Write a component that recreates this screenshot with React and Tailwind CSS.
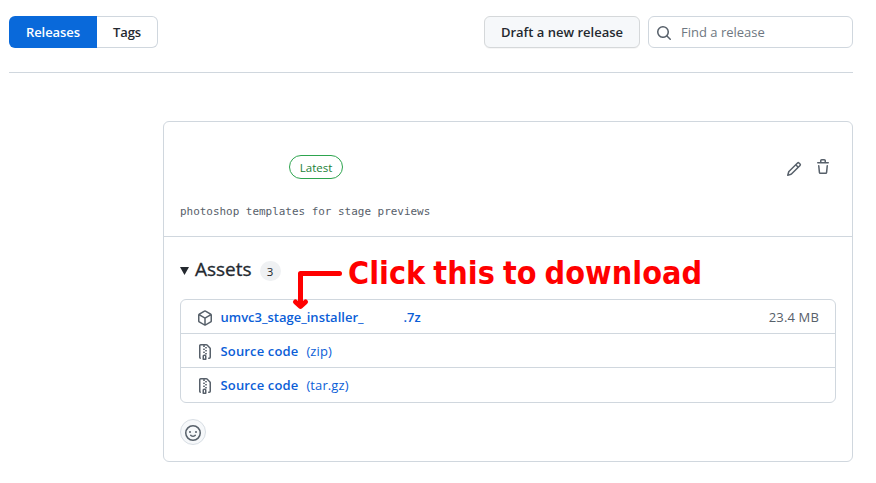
const icons = {
  search: "M10.68 11.74a6 6 0 0 1-7.922-8.982 6 6 0 0 1 8.982 7.922l3.04 3.04a.749.749 0 0 1-.326 1.275.749.749 0 0 1-.734-.215ZM11.5 7a4.499 4.499 0 1 0-8.997 0A4.499 4.499 0 0 0 11.5 7Z",
  pencil: "M11.013 1.427a1.75 1.75 0 0 1 2.474 0l1.086 1.086a1.75 1.75 0 0 1 0 2.474l-8.61 8.61c-.21.21-.47.364-.756.445l-3.251.93a.75.75 0 0 1-.927-.928l.929-3.25c.081-.286.235-.547.445-.758l8.61-8.61Zm.176 4.823L9.75 4.81l-6.286 6.287a.253.253 0 0 0-.064.108l-.558 1.953 1.953-.558a.253.253 0 0 0 .108-.064Zm1.238-3.763a.25.25 0 0 0-.354 0L10.811 3.75l1.439 1.44 1.263-1.263a.25.25 0 0 0 0-.354Z",
  trash: "M11 1.75V3h2.25a.75.75 0 0 1 0 1.5H2.75a.75.75 0 0 1 0-1.5H5V1.75C5 .784 5.784 0 6.75 0h2.5C10.216 0 11 .784 11 1.75ZM4.496 6.675l.66 6.6a.25.25 0 0 0 .249.225h5.19a.25.25 0 0 0 .249-.225l.66-6.6a.75.75 0 0 1 1.492.149l-.66 6.6A1.748 1.748 0 0 1 10.595 15h-5.19a1.75 1.75 0 0 1-1.741-1.575l-.66-6.6a.75.75 0 1 1 1.492-.15ZM6.5 1.75V3h3V1.75a.25.25 0 0 0-.25-.25h-2.5a.25.25 0 0 0-.25.25Z",
  package: "m8.878.392 5.25 3.045c.54.314.872.89.872 1.514v6.098a1.75 1.75 0 0 1-.872 1.514l-5.25 3.045a1.75 1.75 0 0 1-1.756 0l-5.25-3.045A1.75 1.75 0 0 1 1 11.049V4.951c0-.624.332-1.201.872-1.514L7.122.392a1.75 1.75 0 0 1 1.756 0ZM7.875 1.69l-4.63 2.685L8 7.133l4.755-2.758-4.63-2.685a.248.248 0 0 0-.25 0ZM2.5 5.677v5.372c0 .09.047.171.125.216l4.625 2.683V8.432Zm6.25 8.271 4.625-2.683a.25.25 0 0 0 .125-.216V5.677L8.75 8.432Z",
  zip: "M3.5 1.75v11.5c0 .09.048.173.126.217a.75.75 0 0 1-.752 1.298A1.748 1.748 0 0 1 2 13.25V1.75C2 .784 2.784 0 3.75 0h5.586c.464 0 .909.185 1.237.513l2.914 2.914c.329.328.513.773.513 1.237v8.586A1.75 1.75 0 0 1 12.25 15h-.5a.75.75 0 0 1 0-1.5h.5a.25.25 0 0 0 .25-.25V4.664a.25.25 0 0 0-.073-.177L9.513 1.573a.25.25 0 0 0-.177-.073H7.25a.75.75 0 0 1 0 1.5h-.5a.75.75 0 0 1 0-1.5h-3a.25.25 0 0 0-.25.25Zm3.75 8.75h.5c.966 0 1.75.784 1.75 1.75v3a.75.75 0 0 1-.75.75h-2.5a.75.75 0 0 1-.75-.75v-3c0-.966.784-1.75 1.75-1.75ZM6 5.250a.75.75 0 0 1 .75-.75h.5a.75.75 0 0 1 0 1.5h-.5A.75.75 0 0 1 6 5.250Zm.75 2.250h.5a.75.75 0 0 1 0 1.5h-.5a.75.75 0 0 1 0-1.5ZM8 6.750A.75.75 0 0 1 8.750 6h.5a.75.75 0 0 1 0 1.5h-.5A.75.75 0 0 1 8 6.750ZM8.750 3h.5a.75.75 0 0 1 0 1.5h-.5a.75.75 0 0 1 0-1.5ZM8 9.750A.75.75 0 0 1 8.750 9h.5a.75.75 0 0 1 0 1.5h-.5A.75.75 0 0 1 8 9.750Zm-1 2.500v2.250h1v-2.250a.25.25 0 0 0-.25-.25h-.5a.25.25 0 0 0-.25.25Z",
  smiley: "M8 0a8 8 0 1 1 0 16A8 8 0 0 1 8 0ZM1.5 8a6.5 6.5 0 1 0 13 0 6.5 6.5 0 0 0-13 0Zm3.82 1.636a.75.75 0 0 1 1.038.175l.007.009c.103.118.22.222.35.31.264.178.683.37 1.285.37.602 0 1.02-.192 1.285-.371.13-.088.247-.192.35-.31l.007-.008a.75.75 0 0 1 1.222.87c-.22.27-.46.49-.73.672-.63.418-1.37.638-2.127.629-.946 0-1.652-.308-2.126-.63a3.331 3.331 0 0 1-.73-.683.75.75 0 0 1 .174-1.042ZM12 7a1 1 0 1 1-2 0 1 1 0 0 1 2 0ZM5 8a1 1 0 1 1 0-2 1 1 0 0 1 0 2Z",
};

function Icon({ name, className = "" }) {
  return (
    <svg viewBox="0 0 16 16" fill="currentColor" className={`size-4 shrink-0 text-[#57606a] ${className}`}>
      <path d={icons[name]} />
    </svg>
  );
}

function AssetRow({ icon, children }) {
  return (
    <li className="flex h-[34px] items-center border-t border-[#d0d7de] px-4 pt-px first:h-[33px] first:border-t-0 first:pt-0.5 last:h-[35px] last:pt-0">
      <Icon name={icon} className="mt-px mr-[7.500px]" />
      {children}
    </li>
  );
}

function SourceRow({ format }) {
  return (
    <AssetRow icon="zip">
      <span className="mr-2 pt-0.5 font-semibold tracking-[0.150px]">Source code</span>
      <span className="pt-0.5 tracking-[0.100px]">({format})</span>
    </AssetRow>
  );
}

export default function App() {
  return (
    <div className="relative h-[483px] w-[876px] overflow-hidden bg-white pt-4 pr-[23px] pl-[9px] font-['Open_Sans','Noto_Sans',sans-serif] text-[13px] text-[#24292f]">
      <header className="flex h-[57px] items-start justify-between border-b border-[#d0d7de]">
        <nav className="flex h-8 font-semibold">
          <a className="flex w-[88px] items-center justify-center rounded-l-md bg-[#0969da] pt-0.5 tracking-[-0.05px] text-white">Releases</a>
          <a className="flex w-[61px] items-center justify-center rounded-r-md border border-l-0 border-[#d0d7de] pt-0.5 tracking-[-0.05px]">Tags</a>
        </nav>
        <div className="flex h-8 gap-2">
          <button className="w-[156px] rounded-md border border-[#d5d8da] bg-[#f6f8fa] pt-0.5 font-semibold shadow-[0_1px_0_rgba(27,31,36,0.04)]">Draft a new release</button>
          <label className="flex w-[205px] items-center rounded-md border border-[#d0d7de] pt-0.5 pl-[7px] text-[#6e7781]">
            <Icon name="search" className="mr-[9px]" />
            Find a release
          </label>
        </div>
      </header>

      <main className="mt-12 ml-[154px] h-[341px] rounded-md border border-[#d0d7de]">
        <section className="h-[115px] border-b border-[#d0d7de] px-4 pt-[33px]">
          <div className="flex h-6 items-center justify-between pr-[5px] pl-[109px]">
            <span className="flex h-6 w-[54px] items-center justify-center rounded-full border border-[#2da44e] pt-0.5 text-[11.500px] font-medium text-[#1a7f37]">Latest</span>
            <div className="flex gap-[13px]">
              <Icon name="pencil" className="mt-1" />
              <Icon name="trash" className="mt-0.5" />
            </div>
          </div>
          <p className="mt-[25px] font-['DejaVu_Sans_Mono',monospace] text-[10.950px] leading-4 text-[#57606a]">photoshop templates for stage previews</p>
        </section>

        <section className="px-4 pt-[22px]">
          <div className="flex h-6 items-center">
            <svg viewBox="0 0 9 8" className="mr-1.5 h-2 w-[9px]" fill="#24292f"><path d="M0 0h9L4.5 8Z" /></svg>
            <h3 className="-mt-1 text-[19px] font-medium [-webkit-text-stroke:0.3px_#24292f]">Assets</h3>
            <span className="ml-2 flex h-5 w-[21px] items-center justify-center rounded-full bg-[#eff1f3] pt-0.5 text-[11.500px] font-medium">3</span>
          </div>
          <ul className="mt-4 rounded-md border border-[#d0d7de] text-[#0b5ed7]">
            <AssetRow icon="package">
              <span className="w-[183px] font-semibold">umvc3_stage_installer_</span>
              <span className="font-semibold">.7z</span>
              <span className="ml-auto tracking-[0.150px] text-[#57606a]">23.4 MB</span>
            </AssetRow>
            <SourceRow format="zip" />
            <SourceRow format="tar.gz" />
          </ul>
          <button className="mt-4 flex size-[26px] items-center justify-center rounded-full border border-[#d8dee4] bg-[#f6f8fa] pt-px">
            <Icon name="smiley" />
          </button>
        </section>
      </main>

      <svg className="absolute top-[268px] left-[290px] h-[44px] w-[56px]" viewBox="0 0 56 44" fill="none" stroke="#ff0000" strokeWidth="5" strokeLinecap="round" strokeLinejoin="round">
        <path d="M49.5 5.5H10.5V37" />
        <path d="M5.5 34L10.5 38.500L15.500 34" />
      </svg>
      <div className="absolute top-[253px] left-[348px] font-['DejaVu_Sans_Condensed','DejaVu_Sans',sans-serif] text-[32px] leading-10 font-bold tracking-[0.050px] whitespace-nowrap text-[#ff0000] [word-spacing:-2px]">Click this to download</div>
    </div>
  );
}
